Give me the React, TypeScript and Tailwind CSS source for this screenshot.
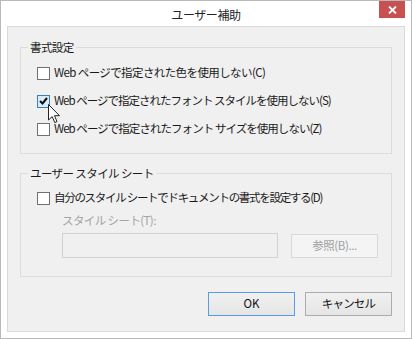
import { ReactNode } from "react";

const font = {
  fontFamily: '"Noto Sans CJK JP", "Noto Sans", sans-serif',
};

const Checkbox = ({ checked }: { checked?: boolean }) => (
  <span
    className={`flex h-[13px] w-[13px] shrink-0 items-center justify-center border ${
      checked ? "border-[#3c7fb1] bg-[#dbecf9]" : "border-[#707070] bg-white"
    }`}
  >
    {checked && (
      <svg width="9" height="8" viewBox="0 0 9 8">
        <path d="M1 4 L3.5 6.5 L8 1" fill="none" stroke="#111" strokeWidth="2" />
      </svg>
    )}
  </span>
);

const Option = ({
  label,
  checked,
  tracking = "tracking-[-0.6px]",
}: {
  label: string;
  checked?: boolean;
  tracking?: string;
}) => (
  <label className={`flex h-[20px] items-center gap-[4px] text-[11.5px] text-[#1a1a1a] ${tracking}`}>
    <Checkbox checked={checked} />
    <span className="whitespace-nowrap">{label}</span>
  </label>
);

const Group = ({
  title,
  className,
  children,
}: {
  title: string;
  className: string;
  children: ReactNode;
}) => (
  <fieldset className={`mx-[12px] border border-[#dcdcdc] ${className}`}>
    <legend className="ml-[7px] h-[16px] px-[2px] text-[11.5px] leading-[16px] tracking-[-0.6px] text-[#1a1a1a]">
      {title}
    </legend>
    {children}
  </fieldset>
);

const Cursor = () => (
  <svg
    className="absolute left-[47px] top-[103px]"
    width="13"
    height="20"
    viewBox="0 0 13 20"
  >
    <path
      d="M0.5 0.5 V16 L4.2 12.6 L6.8 18.6 L9 17.6 L6.5 11.7 H11.5 Z"
      fill="white"
      stroke="#222"
      strokeWidth="1"
    />
  </svg>
);

export default function App() {
  return (
    <div
      className="relative h-[339px] w-[412px] border border-[#b9b9b9] bg-white px-[6px] pb-[6px]"
      style={font}
    >
      <div className="flex h-[25px] items-center justify-center pt-[2px] text-[12px] tracking-[-0.4px] text-[#222]">
        ユーザー補助
      </div>
      <button className="absolute right-[6px] top-0 flex h-[17px] w-[26px] items-center justify-center bg-[#c75050]">
        <svg width="9" height="8" viewBox="0 0 9 8">
          <path d="M1 0.5 L8 7.5 M8 0.5 L1 7.5" stroke="white" strokeWidth="1.8" />
        </svg>
      </button>

      <div className="border border-[#dadada] bg-[#f0f0f0]">
        <Group title="書式設定" className="mt-[12px] pb-[14px]">
          <div className="flex flex-col gap-[8px] pl-[16px] pt-[8px]">
            <Option label="Web ページで指定された色を使用しない(C)" />
            <Option
              label="Web ページで指定されたフォント スタイルを使用しない(S)"
              checked
              tracking="tracking-[-1px]"
            />
            <Option
              label="Web ページで指定されたフォント サイズを使用しない(Z)"
              tracking="tracking-[-0.95px]"
            />
          </div>
        </Group>

        <Group title="ユーザー スタイル シート" className="mt-[11px] pb-[18px]">
          <div className="pl-[16px] pt-[7px]">
            <Option
              label="自分のスタイル シートでドキュメントの書式を設定する(D)"
              tracking="tracking-[-1.3px]"
            />
          </div>
          <div className="mt-[4px] h-[16px] pl-[41px] text-[11.5px] leading-[16px] tracking-[-0.6px] text-[#a3a3a3]">
            スタイル シート(T):
          </div>
          <div className="mt-[5px] flex items-center gap-[13px] pl-[41px]">
            <div className="h-[25px] w-[216px] border border-[#d2d2d2] bg-[#f0f0f0]" />
            <button className="h-[24px] w-[87px] border border-[#d9d9d9] bg-[#f4f4f4] text-[11.5px] tracking-[-0.4px] text-[#a0a0a0]">
              参照(B)...
            </button>
          </div>
        </Group>

        <div className="mt-[15px] flex justify-end gap-[10px] pb-[15px] pr-[12px]">
          <button className="h-[24px] w-[87px] border border-[#569de5] bg-gradient-to-b from-[#f0f0f0] to-[#e5e5e5] text-[11.5px] text-[#111]">
            OK
          </button>
          <button className="h-[24px] w-[87px] border border-[#acacac] bg-gradient-to-b from-[#f0f0f0] to-[#e5e5e5] text-[11.5px] tracking-[-0.8px] text-[#111]">
            キャンセル
          </button>
        </div>
      </div>

      <Cursor />
    </div>
  );
}
